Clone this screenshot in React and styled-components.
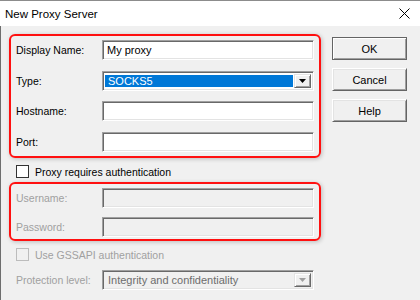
import React from "react";
import styled, { createGlobalStyle } from "styled-components";

const GlobalStyle = createGlobalStyle`
  html, body {
    margin: 0;
    padding: 0;
    background: #f0f0f0;
  }
  * {
    box-sizing: border-box;
  }
`;

const Window = styled.div`
  width: 420px;
  height: 300px;
  display: flex;
  flex-direction: column;
  background: #f0f0f0;
  font-family: "Liberation Sans", Arial, sans-serif;
  font-size: 10.5px;
  color: #000;
  overflow: hidden;
`;

const TitleBar = styled.div`
  height: 26px;
  flex-shrink: 0;
  display: flex;
  align-items: center;
  justify-content: space-between;
  padding: 0 10px 0 5px;
  background: #ffffff;
  border-top: 1px solid #8c8c8c;
`;

const Title = styled.span`
  font-size: 11.5px;
  color: #000;
`;

const Body = styled.div`
  flex: 1;
  display: flex;
  align-items: flex-start;
  padding: 8px 0 0 8px;
  border-left: 1px solid #6e6e6e;
`;

const MainColumn = styled.div`
  width: 312px;
  display: flex;
  flex-direction: column;
`;

const Highlight = styled.div`
  display: flex;
  flex-direction: column;
  gap: ${(p) => p.$gap}px;
  padding: ${(p) => p.$pad};
  border: 2px solid #ff1010;
  border-radius: 6px;
  box-shadow: 1px 1px 4px rgba(0, 0, 0, 0.22);
  margin-top: ${(p) => p.$top || 0}px;
`;

const FieldRow = styled.div`
  display: grid;
  grid-template-columns: 86px 1fr;
  align-items: center;
  height: ${(p) => p.$h || 20}px;
`;

const Label = styled.span`
  color: ${(p) => (p.$disabled ? "#a0a0a0" : "#000")};
`;

const sunken = `
  border-top: 1px solid #a0a0a0;
  border-left: 1px solid #a0a0a0;
  border-bottom: 1px solid #ffffff;
  border-right: 1px solid #ffffff;
  box-shadow: inset 1px 1px #696969, inset -1px -1px #e3e3e3;
`;

const TextBox = styled.div`
  height: 100%;
  display: flex;
  align-items: center;
  padding: 0 4px;
  font-size: 11px;
  background: ${(p) => (p.$disabled ? "#f0f0f0" : "#ffffff")};
  ${sunken}
`;

const Combo = styled.div`
  height: 100%;
  display: flex;
  align-items: stretch;
  padding: 2px;
  font-size: 11px;
  background: ${(p) => (p.$disabled ? "#f0f0f0" : "#ffffff")};
  color: ${(p) => (p.$disabled ? "#6d6d6d" : "#000")};
  ${sunken}
`;

const ComboValue = styled.div`
  flex: 1;
  display: flex;
  align-items: center;
  padding: 0 3px;
  margin: 1px 1px 1px 0;
  background: ${(p) => (p.$selected ? "#0078d7" : "transparent")};
  color: ${(p) => (p.$selected ? "#ffffff" : "inherit")};
  white-space: nowrap;
  overflow: hidden;
`;

const ComboButton = styled.div`
  width: 17px;
  display: flex;
  align-items: center;
  justify-content: center;
  background: #f0f0f0;
  border-top: 1px solid #e3e3e3;
  border-left: 1px solid #e3e3e3;
  border-bottom: 1px solid #696969;
  border-right: 1px solid #696969;
  box-shadow: inset 1px 1px #ffffff, inset -1px -1px #a0a0a0;
`;

const CheckRow = styled.label`
  display: flex;
  align-items: center;
  gap: 6px;
  height: 13px;
  padding-left: 7px;
  margin-top: 7px;
  color: ${(p) => (p.$disabled ? "#a0a0a0" : "#000")};
`;

const CheckBox = styled.span`
  width: 13px;
  height: 13px;
  border: 1px solid ${(p) => (p.$disabled ? "#bcbcbc" : "#333333")};
  background: ${(p) => (p.$disabled ? "#f0f0f0" : "#ffffff")};
`;

const PlainRow = styled(FieldRow)`
  padding: 0 7px;
  margin-top: 9px;
`;

const ButtonColumn = styled.div`
  display: flex;
  flex-direction: column;
  gap: 8px;
  margin: 3px 0 0 11px;
`;

const Button = styled.div`
  width: 75px;
  height: 23px;
  display: flex;
  align-items: center;
  justify-content: center;
  font-size: 11px;
  background: #f0f0f0;
  border-top: 1px solid ${(p) => (p.$default ? "#646464" : "#ffffff")};
  border-left: 1px solid ${(p) => (p.$default ? "#646464" : "#ffffff")};
  border-bottom: 1px solid #646464;
  border-right: 1px solid #646464;
  box-shadow: ${(p) =>
    p.$default
      ? "inset 1px 1px #ffffff, inset -1px -1px #a0a0a0"
      : "inset 1px 1px #e3e3e3, inset -1px -1px #a0a0a0"};
`;

const Arrow = ({ color = "#000" }) => (
  <svg width="7" height="4" viewBox="0 0 7 4">
    <polygon points="0,0 7,0 3.5,4" fill={color} />
  </svg>
);

const CloseIcon = () => (
  <svg width="11" height="11" viewBox="0 0 11 11">
    <path d="M0.5 0.5 L10.5 10.5 M10.5 0.5 L0.5 10.5" stroke="#000" strokeWidth="1" />
  </svg>
);

export default function App() {
  return (
    <Window>
      <GlobalStyle />
      <TitleBar>
        <Title>New Proxy Server</Title>
        <CloseIcon />
      </TitleBar>
      <Body>
        <MainColumn>
          <Highlight $gap={10.5} $pad="4px 5px 4.5px 5px">
            <FieldRow>
              <Label>Display Name:</Label>
              <TextBox>My proxy</TextBox>
            </FieldRow>
            <FieldRow>
              <Label>Type:</Label>
              <Combo>
                <ComboValue $selected>SOCKS5</ComboValue>
                <ComboButton>
                  <Arrow />
                </ComboButton>
              </Combo>
            </FieldRow>
            <FieldRow>
              <Label>Hostname:</Label>
              <TextBox />
            </FieldRow>
            <FieldRow>
              <Label>Port:</Label>
              <TextBox />
            </FieldRow>
          </Highlight>

          <CheckRow>
            <CheckBox />
            Proxy requires authentication
          </CheckRow>

          <Highlight $gap={9} $pad="4px 5px 2px 5px" $top={4}>
            <FieldRow>
              <Label $disabled>Username:</Label>
              <TextBox $disabled />
            </FieldRow>
            <FieldRow>
              <Label $disabled>Password:</Label>
              <TextBox $disabled />
            </FieldRow>
          </Highlight>

          <CheckRow $disabled>
            <CheckBox $disabled />
            Use GSSAPI authentication
          </CheckRow>

          <PlainRow $h={19}>
            <Label $disabled>Protection level:</Label>
            <Combo $disabled>
              <ComboValue>Integrity and confidentiality</ComboValue>
              <ComboButton>
                <Arrow color="#a0a0a0" />
              </ComboButton>
            </Combo>
          </PlainRow>
        </MainColumn>

        <ButtonColumn>
          <Button $default>OK</Button>
          <Button>Cancel</Button>
          <Button>Help</Button>
        </ButtonColumn>
      </Body>
    </Window>
  );
}
